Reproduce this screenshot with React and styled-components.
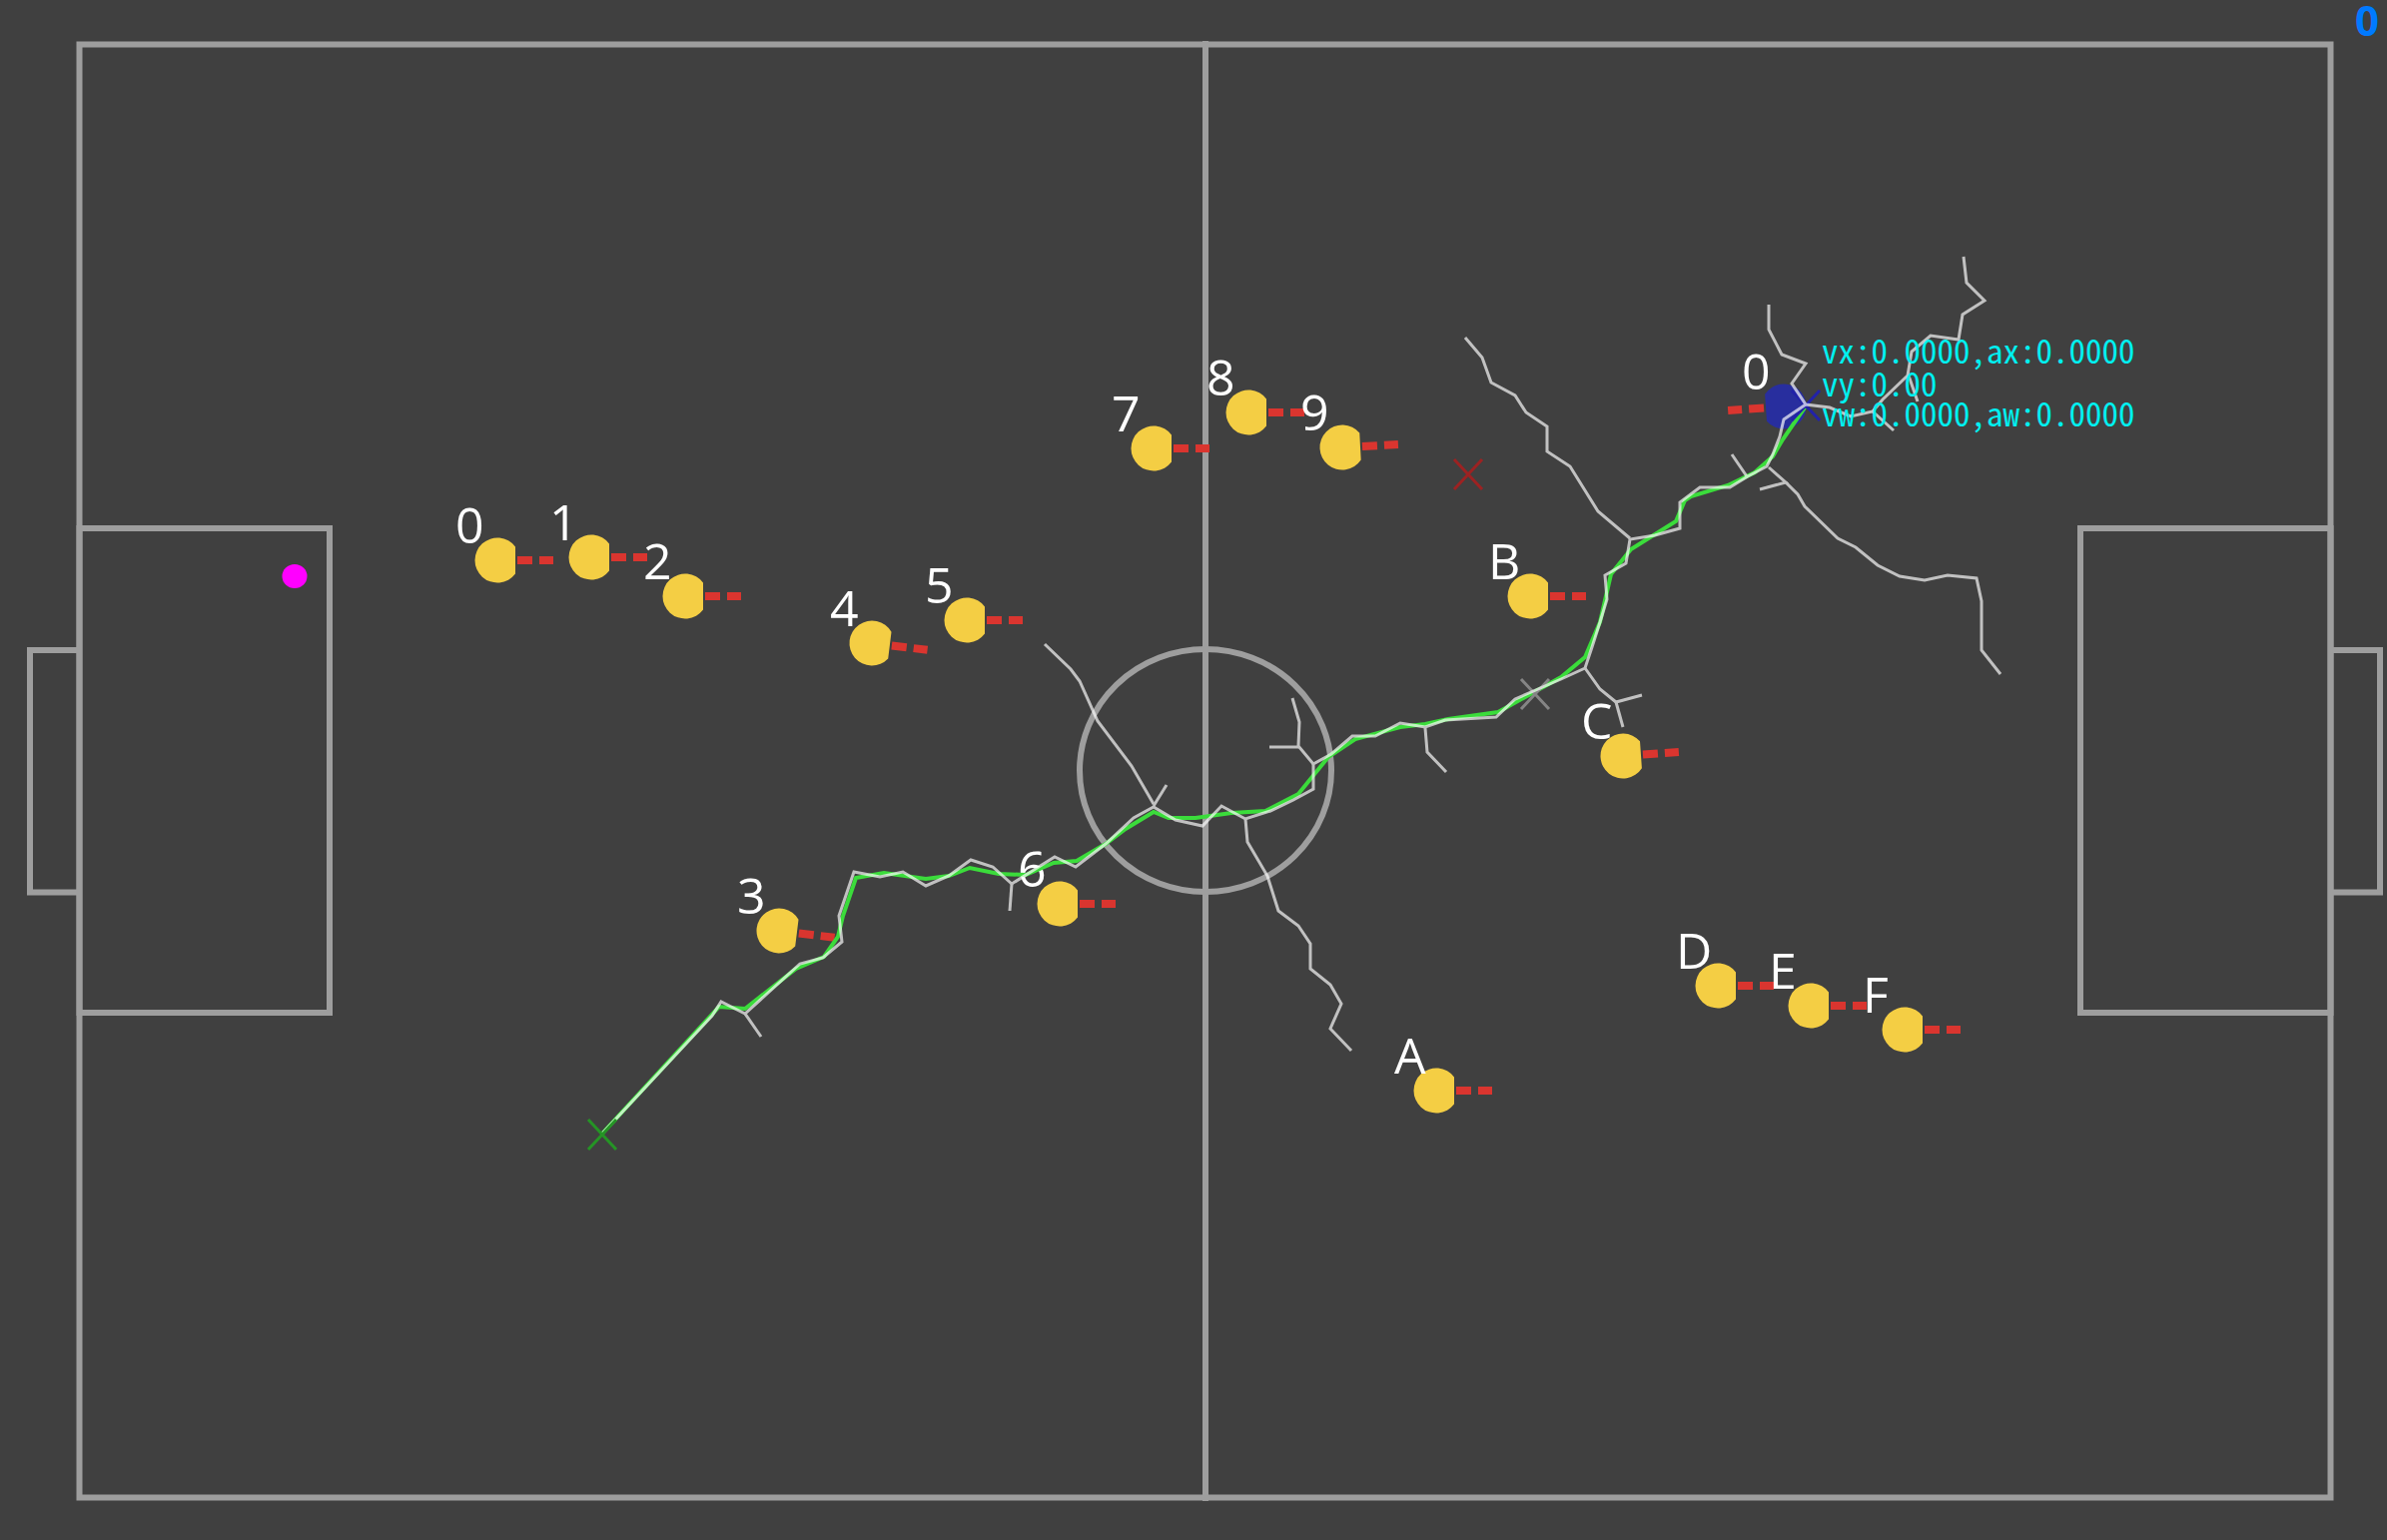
import React from "react";
import styled, { createGlobalStyle } from "styled-components";

const GlobalStyle = createGlobalStyle`
  body {
    margin: 0;
    background: #404040;
  }
`;

const Page = styled.main`
  width: 100%;
  background: #404040;
`;

const Field = styled.svg`
  display: block;
  width: 100%;
  height: auto;
`;

const Markings = styled.g`
  fill: none;
  stroke: #9e9e9e;
  stroke-width: 6px;
`;

const Score = styled.text`
  fill: #007aff;
  font: 700 42px "Open Sans", "Noto Sans", sans-serif;
`;

const RobotLabel = styled.text`
  fill: #ffffff;
  font: 400 50px "Open Sans", "Noto Sans", sans-serif;
`;

const RobotBody = styled.path`
  fill: ${(p) => (p.$team === "blue" ? "#282e9e" : "#f4ce44")};
`;

const Heading = styled.path`
  fill: none;
  stroke: #da352f;
  stroke-width: 8px;
`;

const Telemetry = styled.text`
  fill: #00f0f0;
  font: 400 33px "Noto Sans CJK SC", monospace;
  font-feature-settings: "hwid" 1;
`;

const Tree = styled.g`
  fill: none;
  stroke: #ffffff;
  stroke-width: 3px;
  opacity: 0.68;
`;

const PlannedPath = styled.polyline`
  fill: none;
  stroke: #3bdc3b;
  stroke-width: 4px;
`;

const Cross = styled.path`
  fill: none;
  stroke: ${(p) => p.$color};
  stroke-width: 3px;
`;

const Ball = styled.ellipse`
  fill: #ff00ff;
`;

const robots = [
  { id: "0", x: 498, y: 561 },
  { id: "1", x: 592, y: 558 },
  { id: "2", x: 686, y: 597 },
  { id: "3", x: 780, y: 932, angle: 7 },
  { id: "4", x: 873, y: 644, angle: 7 },
  { id: "5", x: 968, y: 621 },
  { id: "6", x: 1061, y: 905 },
  { id: "7", x: 1155, y: 449 },
  { id: "8", x: 1250, y: 413 },
  { id: "9", x: 1344, y: 448, angle: -3 },
  { id: "A", x: 1438, y: 1092 },
  { id: "B", x: 1532, y: 597 },
  { id: "C", x: 1625, y: 757, angle: -4 },
  { id: "D", x: 1720, y: 987 },
  { id: "E", x: 1813, y: 1007 },
  { id: "F", x: 1907, y: 1031 },
  { id: "0", x: 1786, y: 407, angle: 176, team: "blue" },
];

const branches = [
  "1808,405 1786,420 1782,437 1775,455 1769,467 1750,477 1732,488 1702,488 1682,503 1682,529 1657,536 1632,540 1628,564 1607,576 1609,600 1602,623 1594,648 1587,669 1563,680 1517,700 1498,718 1447,721 1427,728 1402,724 1377,737 1354,737 1333,755 1315,765 1315,790 1295,801 1272,812 1247,820 1223,807 1204,827 1177,821 1155,808 1135,819 1107,845 1077,868 1056,858 1032,873 1013,885 994,868 972,861 950,877 927,887 904,873 881,878 855,873 840,917 843,943 824,959 801,965 746,1015 722,1003 713,1017 603,1135",
  "1771,305 1771,330 1784,355 1808,364 1794,384 1808,405 1832,408 1853,417 1875,412 1885,400 1910,376 1914,352 1933,336 1961,340 1965,315 1987,301 1969,283 1966,257",
  "1911,376 1920,402",
  "1875,412 1896,431",
  "746,1015 762,1038",
  "1013,885 1011,912",
  "1155,807 1168,786",
  "1155,805 1133,767 1099,722 1081,682 1072,670 1046,645",
  "1247,820 1249,843 1269,877 1280,912 1300,927 1312,945 1312,970 1332,986 1343,1005 1332,1030 1353,1052",
  "1315,765 1300,747 1301,723 1294,699",
  "1300,748 1271,748",
  "1427,729 1429,753 1448,773",
  "1587,669 1602,690 1618,703 1644,696",
  "1618,703 1625,728",
  "1632,539 1600,512 1572,467 1549,452 1549,427 1528,413 1517,396 1493,383 1484,358 1467,338",
  "1749,477 1734,455",
  "1771,468 1788,483 1762,490",
  "1788,483 1800,495 1807,507 1840,539 1858,548 1880,566 1902,577 1927,581 1950,576 1979,579 1984,602 1984,651 2003,675",
];

const plan =
  "1807,408 1785,440 1775,457 1757,473 1730,486 1693,497 1687,501 1678,522 1633,550 1613,575 1602,623 1587,658 1563,678 1500,713 1450,720 1427,725 1402,728 1357,740 1330,758 1300,795 1267,812 1233,814 1197,819 1170,819 1155,813 1127,830 1107,845 1078,862 1055,864 1027,876 1000,875 971,869 950,877 927,880 885,874 857,879 844,917 839,938 825,958 797,970 746,1010 720,1008 603,1135";

const telemetry = [
  { y: 364, text: "vx:0.0000,ax:0.0000" },
  { y: 397, text: "vy:0.00" },
  { y: 427, text: "vw:0.0000,aw:0.0000" },
];

function Robot({ id, x, y, angle = 0, team = "yellow" }) {
  return (
    <g transform={`translate(${x} ${y})`}>
      <g transform={`rotate(${angle})`}>
        <RobotBody $team={team} d="M18 -13.5A22.5 22.5 0 1 0 18 13.5Z" />
        <Heading d="M20 0H35M42 0H56" />
      </g>
      <RobotLabel x="-42" y="-17">{id}</RobotLabel>
    </g>
  );
}

function Marker({ x, y, color }) {
  return (
    <Cross
      $color={color}
      d={`M${x - 14} ${y - 15}L${x + 14} ${y + 15}M${x + 14} ${y - 15}L${x - 14} ${y + 15}`}
    />
  );
}

export default function App() {
  return (
    <Page>
      <GlobalStyle />
      <Field viewBox="0 0 2390 1542" role="img" aria-label="Robot field">
        <Markings>
          <rect x="79.5" y="44.5" width="2254" height="1455" />
          <path d="M1207 41V1503" />
          <ellipse cx="1207" cy="771.5" rx="126" ry="121.5" />
          <rect x="79.5" y="529" width="250.5" height="485" />
          <rect x="2083" y="529" width="250.5" height="485" />
          <path d="M79.5 651H30V893.5H79.5" />
          <path d="M2333.5 651H2383V893.5H2333.5" />
        </Markings>
        <Ball cx="295" cy="577" rx="12.5" ry="12" />
        <Score x="2358" y="36">0</Score>
        {robots.map((r) => (
          <Robot key={`${r.team || "yellow"}-${r.id}`} {...r} />
        ))}
        <PlannedPath points={plan} />
        <Marker x={1808} y={406} color="#2222a8" />
        <Marker x={1470} y={475} color="#9c2222" />
        <Marker x={1537} y={695} color="#858585" />
        <Tree>
          {branches.map((points) => (
            <polyline key={points} points={points} />
          ))}
        </Tree>
        <Marker x={603} y={1136} color="#259425" />
        {telemetry.map((line) => (
          <Telemetry key={line.text} x="1824" y={line.y}>
            {line.text}
          </Telemetry>
        ))}
      </Field>
    </Page>
  );
}
